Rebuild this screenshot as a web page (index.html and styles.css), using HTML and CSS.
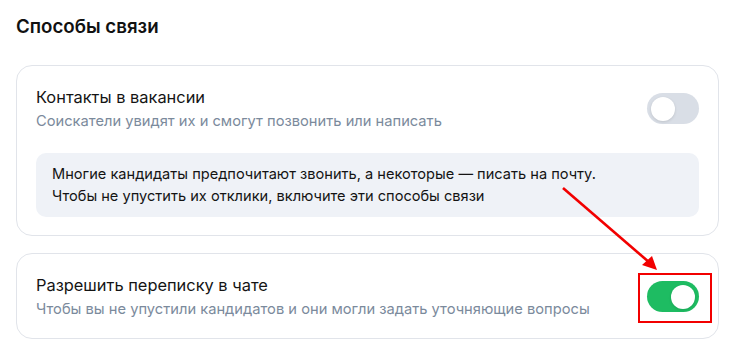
FILE: index.html
```html
<!DOCTYPE html>
<html lang="ru">
  <head>
    <meta charset="UTF-8" />
    <title>Способы связи</title>
    <link rel="stylesheet" href="styles.css">
  </head>
  <body>
    <div class="page">
      <h2 class="section-title">Способы связи</h2>

      <section class="card">
        <div class="row">
          <div class="row-text">
            <div class="row-title">Контакты в вакансии</div>
            <div class="row-sub">Соискатели увидят их и смогут позвонить или написать</div>
          </div>
          <span class="toggle"><span class="knob"></span></span>
        </div>
        <div class="notice">
          Многие кандидаты предпочитают звонить, а некоторые — писать на почту.<br />
          Чтобы не упустить их отклики, включите эти способы связи
        </div>
      </section>

      <section class="card">
        <div class="row">
          <div class="row-text">
            <div class="row-title">Разрешить переписку в чате</div>
            <div class="row-sub">Чтобы вы не упустили кандидатов и они могли задать уточняющие вопросы</div>
          </div>
          <span class="toggle on"><span class="knob"></span></span>
        </div>
      </section>

      <!-- annotation over the screenshot -->
      <div class="mark-box"></div>
      <svg class="mark-arrow" width="746" height="360" viewBox="0 0 746 360">
        <line x1="563" y1="188" x2="650" y2="263" stroke="#f20000" stroke-width="2.6" />
        <polygon points="657,270 642,265 652,256" fill="#f20000" />
      </svg>
    </div>
  </body>
</html>
```

FILE: styles.css
```css
* {
  margin: 0;
  padding: 0;
  box-sizing: border-box;
}
body {
  font-family: Inter, "Noto Sans", sans-serif;
  background: #ffffff;
  color: #1a1a1a;
}
.page {
  position: relative;
  padding: 14px 27px 0 16px;
}
.section-title {
  font-size: 18.7px;
  font-weight: 600;
  line-height: 26px;
  color: #111;
  margin-bottom: 25px;
}
.card {
  border: 1px solid #e1e4ea;
  border-radius: 16px;
  padding: 19px 19px 18px 19px;
  margin-bottom: 17px;
}
.row {
  display: flex;
  align-items: center;
  justify-content: space-between;
}
.row-title {
  font-size: 16.4px;
  line-height: 24px;
  color: #141414;
}
.row-sub {
  font-size: 14.7px;
  line-height: 22px;
  color: #7b8a9c;
  margin-top: 1px;
}
.toggle {
  width: 52px;
  height: 31px;
  border-radius: 16px;
  background: #d9dee6;
  display: flex;
  align-items: center;
  padding: 0 4px;
  flex-shrink: 0;
}
.knob {
  width: 24px;
  height: 24px;
  border-radius: 50%;
  background: #ffffff;
  box-shadow: 0 1px 3px rgba(0, 0, 0, 0.12);
}
.toggle.on {
  background: #1ebc62;
  justify-content: flex-end;
}
.notice {
  margin-top: 21px;
  background: #eff2f7;
  border-radius: 10px;
  padding: 10px 16px;
  font-size: 14.6px;
  line-height: 22px;
  color: #141414;
}
.mark-box {
  position: absolute;
  left: 638px;
  top: 273px;
  width: 74px;
  height: 50px;
  border: 2px solid #f20000;
}
.mark-arrow {
  position: absolute;
  left: 0;
  top: 0;
  pointer-events: none;
}
```
